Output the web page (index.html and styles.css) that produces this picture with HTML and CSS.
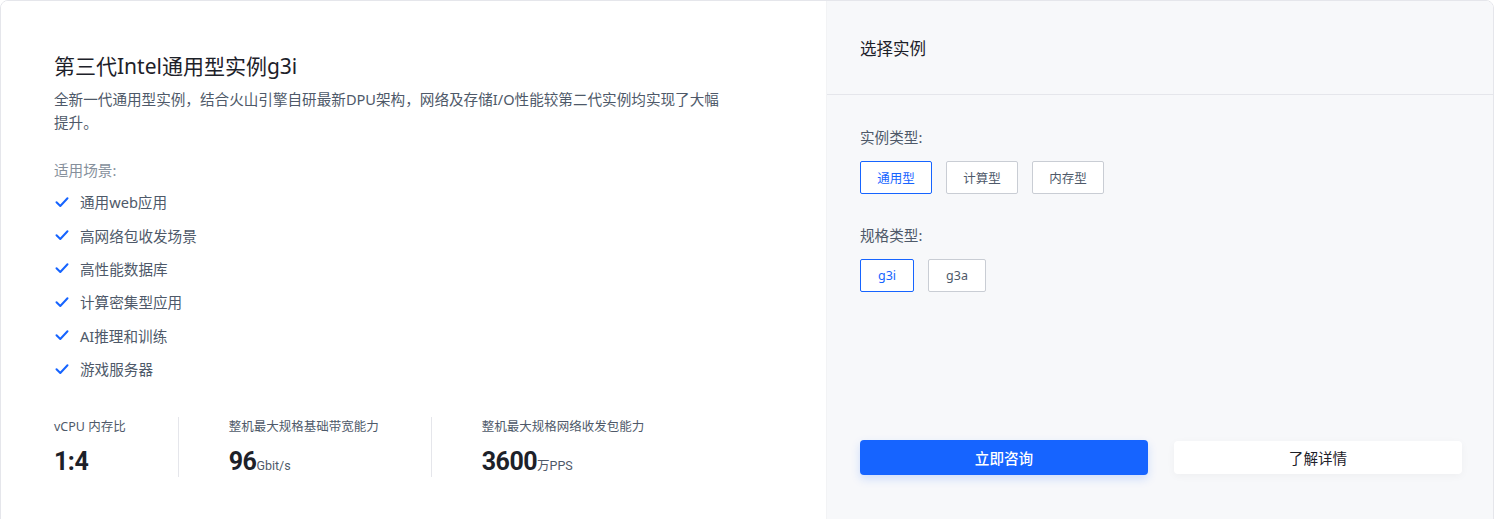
FILE: index.html
```html
<!DOCTYPE html>
<html lang="zh-CN">
<head>
<meta charset="utf-8">
<link rel="stylesheet" href="styles.css">
</head>
<body>
<div class="card">
  <section class="info">
    <h1 class="title">第三代Intel通用型实例g3i</h1>
    <p class="desc">全新一代通用型实例，结合火山引擎自研最新DPU架构，网络及存储I/O性能较第二代实例均实现了大幅提升。</p>
    <div class="scene-label">适用场景:</div>
    <ul class="scenes">
      <li><svg class="check" viewBox="0 0 14 14"><path d="M1.5 7.2 L5.3 11 L12.5 3.2" fill="none" stroke="#1664ff" stroke-width="2" stroke-linecap="round" stroke-linejoin="round"/></svg>通用web应用</li>
      <li><svg class="check" viewBox="0 0 14 14"><path d="M1.5 7.2 L5.3 11 L12.5 3.2" fill="none" stroke="#1664ff" stroke-width="2" stroke-linecap="round" stroke-linejoin="round"/></svg>高网络包收发场景</li>
      <li><svg class="check" viewBox="0 0 14 14"><path d="M1.5 7.2 L5.3 11 L12.5 3.2" fill="none" stroke="#1664ff" stroke-width="2" stroke-linecap="round" stroke-linejoin="round"/></svg>高性能数据库</li>
      <li><svg class="check" viewBox="0 0 14 14"><path d="M1.5 7.2 L5.3 11 L12.5 3.2" fill="none" stroke="#1664ff" stroke-width="2" stroke-linecap="round" stroke-linejoin="round"/></svg>计算密集型应用</li>
      <li><svg class="check" viewBox="0 0 14 14"><path d="M1.5 7.2 L5.3 11 L12.5 3.2" fill="none" stroke="#1664ff" stroke-width="2" stroke-linecap="round" stroke-linejoin="round"/></svg>AI推理和训练</li>
      <li><svg class="check" viewBox="0 0 14 14"><path d="M1.5 7.2 L5.3 11 L12.5 3.2" fill="none" stroke="#1664ff" stroke-width="2" stroke-linecap="round" stroke-linejoin="round"/></svg>游戏服务器</li>
    </ul>
    <div class="stats">
      <div class="stat">
        <div class="stat-label">vCPU 内存比</div>
        <div class="stat-value">1:4</div>
      </div>
      <div class="stat">
        <div class="stat-label">整机最大规格基础带宽能力</div>
        <div class="stat-value">96<span class="unit">Gbit/s</span></div>
      </div>
      <div class="stat">
        <div class="stat-label">整机最大规格网络收发包能力</div>
        <div class="stat-value">3600<span class="unit">万PPS</span></div>
      </div>
    </div>
  </section>
  <section class="select">
    <div class="select-head">选择实例</div>
    <div class="select-body">
      <div class="field-label">实例类型:</div>
      <div class="options">
        <button class="opt active">通用型</button>
        <button class="opt">计算型</button>
        <button class="opt">内存型</button>
      </div>
      <div class="field-label second">规格类型:</div>
      <div class="options">
        <button class="opt small active">g3i</button>
        <button class="opt small">g3a</button>
      </div>
      <div class="actions">
        <button class="btn primary">立即咨询</button>
        <button class="btn ghost">了解详情</button>
      </div>
    </div>
  </section>
</div>
</body>
</html>
```
FILE: styles.css
```css
* { box-sizing: border-box; }
html, body { margin: 0; padding: 0; }
body {
  font-family: "Noto Sans", "Noto Sans CJK SC", sans-serif;
  color: #1d2129;
  background: #fff;
}
.card {
  display: flex;
  width: 1494px;
  height: 540px;
  border: 1px solid #e5e6eb;
  border-radius: 8px;
  overflow: hidden;
}
.info {
  width: 825px;
  padding: 51px 0 0 53px;
  background: #fff;
}
.title {
  margin: 0;
  font-size: 21px;
  font-weight: 400;
  line-height: 28px;
  color: #1d2129;
}
.desc {
  margin: 8px 0 0;
  width: 672px;
  font-size: 14.6px;
  line-height: 23px;
  color: #4e5969;
}
.scene-label {
  margin-top: 25px;
  font-size: 14.6px;
  line-height: 22px;
  color: #86909c;
}
.scenes {
  list-style: none;
  margin: 4px 0 0;
  padding: 0;
}
.scenes li {
  display: flex;
  align-items: center;
  height: 33.4px;
  font-size: 14.6px;
  color: #4e5969;
}
.check {
  width: 14px;
  height: 14px;
  margin: 0 11px 0 1px;
}
.stats {
  display: flex;
  margin-top: 32px;
}
.stat {
  padding: 0 52px 0 50px;
  border-left: 1px solid #e5e6eb;
  height: 60px;
}
.stat:first-child {
  padding-left: 0;
  border-left: none;
}
.stat-label {
  font-size: 12.5px;
  line-height: 20px;
  color: #4e5969;
}
.stat-value {
  margin-top: 9px;
  font-family: "Roboto", "Noto Sans CJK SC", sans-serif;
  font-size: 25px;
  font-weight: 700;
  line-height: 32px;
  color: #1d2129;
  letter-spacing: -0.5px;
}
.unit {
  font-size: 12.5px;
  font-weight: 400;
  color: #4e5969;
  letter-spacing: 0;
}
.select {
  flex: 1;
  background: #f7f8fa;
  border-left: 1px solid #f2f3f5;
  display: flex;
  flex-direction: column;
}
.select-head {
  height: 94px;
  padding: 0 0 0 33px;
  display: flex;
  align-items: center;
  font-size: 16.5px;
  color: #1d2129;
  border-bottom: 1px solid #e5e6eb;
}
.select-body {
  padding: 31px 31px 0 33px;
}
.field-label {
  font-size: 14.6px;
  line-height: 22px;
  color: #4e5969;
}
.field-label.second { margin-top: 30px; }
.options {
  display: flex;
  gap: 14px;
  margin-top: 13px;
}
.opt {
  height: 33px;
  width: 72px;
  padding: 0;
  background: #fff;
  border: 1px solid #c9cdd4;
  border-radius: 2px;
  font-family: inherit;
  font-size: 12.5px;
  color: #4e5969;
}
.opt.small { width: 54px; }
.opt.small + .opt.small { width: 58px; }
.opt.active {
  border-color: #1664ff;
  color: #1664ff;
}
.actions {
  display: flex;
  gap: 26px;
  margin-top: 148px;
}
.btn {
  flex: 1;
  height: 35px;
  border: none;
  border-radius: 4px;
  font-family: inherit;
  font-size: 14.6px;
}
.btn.primary {
  background: #1664ff;
  color: #fff;
  font-weight: 500;
  box-shadow: 0 4px 10px rgba(22, 100, 255, 0.18);
}
.btn.ghost {
  height: 33px;
  margin-top: 1px;
  background: #fff;
  color: #1d2129;
  box-shadow: 0 2px 8px rgba(0, 0, 0, 0.04);
}
```
